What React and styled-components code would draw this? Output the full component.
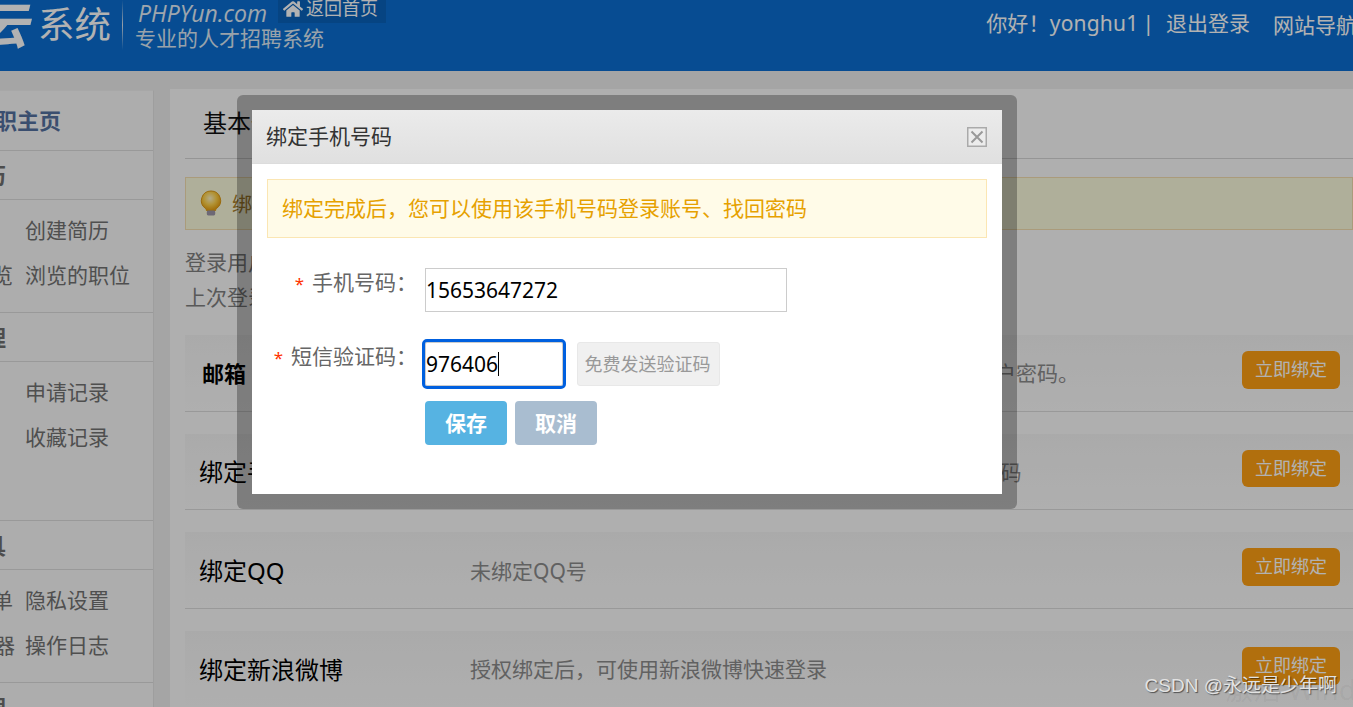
import styled, { createGlobalStyle } from "styled-components";
import { FaHome } from "react-icons/fa";

const cjk = `"Noto Sans", "Noto Sans CJK SC", sans-serif`;

const Global = createGlobalStyle`
  html, body {
    margin: 0;
    height: 100%;
    overflow: hidden;
    background: #ececec;
    font-family: ${cjk};
  }
  * { box-sizing: border-box; }
`;

const Page = styled.div`
  position: relative;
  width: 1353px;
  height: 707px;
  overflow: hidden;
`;

/* header */
const Header = styled.header`
  display: flex;
  align-items: flex-start;
  height: 71px;
  background: #0b6ed1;
  color: #fff;
  overflow: hidden;
`;
const Brand = styled.div`
  display: flex;
  align-items: center;
  height: 50px;
  flex-shrink: 0;
`;
const BrandMark = styled.span`
  font-size: 50px;
  line-height: 50px;
  font-weight: 700;
  font-style: italic;
  width: 38px;
  margin-left: -22px;
  margin-right: 22px;
  color: #fff;
`;
const BrandName = styled.span`
  font-size: 36.5px;
  line-height: 48px;
  height: 50px;
  width: 84px;
  white-space: nowrap;
`;
const BrandRule = styled.span`
  width: 1px;
  height: 50px;
  background: linear-gradient(#0b6ed1, #d8e4f0 50%, #0b6ed1);
  margin-right: 12px;
`;
const Slogan = styled.div`
  display: flex;
  flex-direction: column;
  height: 50px;
`;
const SloganTop = styled.div`
  display: flex;
  height: 26px;
`;
const Domain = styled.span`
  width: 143px;
  font-family: "Open Sans", sans-serif;
  font-style: italic;
  font-size: 23px;
  line-height: 26px;
  padding-left: 3px;
  color: #e4eef8;
  white-space: nowrap;
`;
const HomeLink = styled.a`
  display: flex;
  align-items: center;
  gap: 3px;
  width: 108px;
  height: 23px;
  padding: 0 0 6px 5px;
  background: rgba(0, 0, 0, 0.1);
  font-size: 18px;
  line-height: 17px;
  white-space: nowrap;
`;
const SloganText = styled.span`
  font-size: 21px;
  line-height: 24px;
  white-space: nowrap;
  color: #dbe8f4;
`;
const UserNav = styled.nav`
  display: flex;
  align-items: flex-start;
  margin-left: auto;
  margin-right: -4px;
  padding-top: 7px;
  font-size: 21px;
  line-height: 32px;
  white-space: nowrap;
`;
const Hello = styled.span`
  letter-spacing: 0.2px;
`;
const Pipe = styled.span`
  margin: 0 12px 0 4px;
`;
const NavLink = styled.a`
  margin-left: ${(p) => p.$gap || 0}px;
  margin-top: ${(p) => p.$drop || 0}px;
`;

/* body */
const Body = styled.div`
  display: flex;
  align-items: flex-start;
  gap: 16px;
  padding-top: 18px;
`;
const Sidebar = styled.aside`
  width: 154px;
  height: 620px;
  margin-top: 1px;
  flex-shrink: 0;
  overflow: hidden;
  background: #f8f8f8;
  border-right: 1px solid #e2e2e2;
  border-top: 1px solid #f0f0f0;
`;
const SideInner = styled.div`
  width: 243px;
  margin-left: -90px;
`;
const SideHead = styled.div`
  height: ${(p) => p.$height || 49}px;
  padding: 0 0 3px ${(p) => p.$indent || 8}px;
  display: flex;
  align-items: center;
  font-size: 22px;
  font-weight: 700;
  color: ${(p) => p.$accent ? "#54709f" : "#6f6f6f"};
  border-bottom: 1px solid #dcdcdc;
  white-space: nowrap;
`;
const SideList = styled.div`
  height: ${(p) => p.$height}px;
  padding-top: 6px;
  border-bottom: 1px solid #dcdcdc;
`;
const SideRow = styled.div`
  display: flex;
  gap: 12px;
  height: 45px;
  align-items: center;
`;
const SideCell = styled.a`
  width: ${(p) => p.$wide ? 103 : 120}px;
  text-align: ${(p) => p.$wide ? "right" : "left"};
  font-size: 21px;
  color: #727272;
  white-space: nowrap;
`;

const Main = styled.main`
  flex: 1;
  height: 620px;
  overflow: hidden;
  padding-left: 15px;
  background: #fbfbfb;
`;
const MainTitle = styled.div`
  height: 70px;
  padding: 18px 0 0 18px;
  font-size: 24px;
  line-height: 32px;
  color: #111;
  border-bottom: 1px solid #d6d6d6;
`;
const Notice = styled.div`
  display: flex;
  align-items: center;
  gap: 10px;
  height: 53px;
  margin-top: 18px;
  padding-left: 14px;
  background: #fbfbdd;
  border: 1px solid #f4dfb0;
  font-size: 20px;
  color: #a8802c;
`;
const LoginInfo = styled.div`
  height: 68px;
  margin-top: 15px;
  font-size: 21px;
  line-height: 35px;
  color: #808080;
`;
const BindRow = styled.div`
  display: flex;
  align-items: center;
  height: 76.67px;
  margin-top: 22px;
  padding: 0 13px 0 14px;
  background: linear-gradient(#f4f4f4, #fbfbfb);
  border-bottom: 1px solid #dcdcdc;
`;
const BindTitle = styled.span`
  width: 271px;
  padding-left: ${(p) => p.$strong ? 3 : 0}px;
  margin-bottom: 1px;
  font-size: ${(p) => p.$strong ? 22 : 24}px;
  font-weight: ${(p) => p.$strong ? 700 : 400};
  color: #000;
  white-space: nowrap;
`;
const BindDesc = styled.span`
  flex: 1;
  margin-bottom: 1px;
  font-size: 21px;
  color: #8c8c8c;
  white-space: nowrap;
`;
const BindButton = styled.a`
  width: 98px;
  height: 37.5px;
  margin-bottom: 6px;
  border-radius: 6px;
  background: #fea014;
  color: #fff;
  font-size: 18px;
  line-height: 37px;
  text-align: center;
`;

/* dimmed layer and dialog */
const Overlay = styled.div`
  position: absolute;
  inset: 0;
  background: rgba(0, 0, 0, 0.3);
`;
const DialogFrame = styled.div`
  position: absolute;
  left: 237px;
  top: 95px;
  width: 780px;
  height: 414px;
  padding: 15px;
  border-radius: 6px;
  background: rgba(0, 0, 0, 0.28);
`;
const Dialog = styled.div`
  height: 100%;
  background: #fff;
`;
const DialogBar = styled.div`
  display: flex;
  align-items: center;
  justify-content: space-between;
  height: 54px;
  padding: 0 15px;
  background: linear-gradient(#ebebeb, #e0e0e0);
  border-bottom: 1px solid #dcdcdc;
`;
const DialogTitle = styled.span`
  margin: -3px 0 0 -1px;
  font-size: 21px;
  color: #333;
`;
const CloseIcon = styled.svg`
  width: 20px;
  height: 20px;
`;
const DialogBody = styled.div`
  padding: 15px;
`;
const Tip = styled.div`
  height: 59px;
  padding-left: 14px;
  background: #fffbe8;
  border: 1px solid #fbe6b3;
  font-size: 21px;
  line-height: 56px;
  color: #e6a100;
`;
const FormRow = styled.div`
  display: flex;
  align-items: flex-start;
  margin-top: ${(p) => p.$top}px;
  padding-left: 158px;
`;
const Label = styled.label`
  position: absolute;
  transform: translateX(calc(-100% - 8px));
  font-size: 21px;
  line-height: 28px;
  color: #666;
  white-space: nowrap;
`;
const Star = styled.i`
  font-style: normal;
  font-size: 17px;
  color: #f30;
  margin-right: 8px;
`;
const Field = styled.div`
  display: flex;
  align-items: center;
  width: ${(p) => p.$width}px;
  height: 44px;
  border: 1px solid #ccc;
  font-size: 21px;
  color: #000;
  ${(p) => p.$focused && `
    outline: 3px solid #0060df;
    border-radius: 2px;
    &::after {
      content: "";
      width: 1px;
      height: 24px;
      background: #000;
    }
  `}
`;
const SendCode = styled.span`
  width: 143px;
  height: 44px;
  margin-left: 14px;
  padding-right: 2px;
  border: 1px solid #e8e8e8;
  border-radius: 3px;
  background: #f0f0f0;
  color: #999;
  font-size: 18px;
  line-height: 43px;
  text-align: center;
  white-space: nowrap;
`;
const Action = styled.a`
  width: 82px;
  height: 44px;
  margin-right: 8px;
  border-radius: 4px;
  background: ${(p) => p.$muted ? "#a9bdd0" : "#56b3e2"};
  color: #fff;
  font-size: 21px;
  font-weight: 700;
  line-height: 45px;
  text-align: center;
`;
const ActivationHint = styled.div`
  position: absolute;
  left: 1225px;
  top: 670px;
  font-size: 28px;
  line-height: 38px;
  color: rgba(0, 0, 0, 0.05);
  white-space: nowrap;
`;
const Watermark = styled.div`
  position: absolute;
  right: 16px;
  top: 673px;
  font-family: "Liberation Sans", "Noto Sans CJK SC", sans-serif;
  font-size: 19px;
  line-height: 26px;
  color: #e2e2e2;
  text-shadow: 1px 1px 1px rgba(0, 0, 0, 0.55);
  white-space: nowrap;
`;

const Bulb = () => (
  <svg width="22" height="27" viewBox="0 0 22 27">
    <defs>
      <radialGradient id="bulbGlow" cx="0.45" cy="0.38" r="0.6">
        <stop offset="0" stopColor="#fff6c8" />
        <stop offset="0.55" stopColor="#ffd24a" />
        <stop offset="1" stopColor="#e8a010" />
      </radialGradient>
    </defs>
    <path d="M11 1a9.6 9.6 0 0 0-5.6 17.4c.7.6 1 1.3 1 2.1h9.2c0-.8.3-1.5 1-2.1A9.6 9.6 0 0 0 11 1z" fill="url(#bulbGlow)" stroke="#dd9a14" />
    <rect x="6.8" y="20.5" width="8.4" height="5" rx="1.4" fill="#9c96a8" />
  </svg>
);

const rows = [
  { title: "邮箱", strong: true, desc: "绑定邮箱后，您可以使用该邮箱登录网站，可用它找回账户密码。" },
  { title: "绑定手机", desc: "绑定手机号后， 您可以使用该手机号码登录账号、找回密码" },
  { title: "绑定QQ", desc: "未绑定QQ号" },
  { title: "绑定新浪微博", desc: "授权绑定后，可使用新浪微博快速登录" },
];

const App = () => {
  return (
    <Page>
      <Global />
      <Header>
        <Brand>
          <BrandMark>云</BrandMark>
          <BrandName>系统</BrandName>
          <BrandRule />
          <Slogan>
            <SloganTop>
              <Domain>PHPYun.com</Domain>
              <HomeLink>
                <FaHome size={20} />
                返回首页
              </HomeLink>
            </SloganTop>
            <SloganText>专业的人才招聘系统</SloganText>
          </Slogan>
        </Brand>
        <UserNav>
          <Hello>你好！yonghu1</Hello>
          <Pipe>|</Pipe>
          <NavLink>退出登录</NavLink>
          <NavLink $gap={23} $drop={2}>网站导航</NavLink>
        </UserNav>
      </Header>

      <Body>
        <Sidebar>
          <SideInner>
            <SideHead $height={60} $indent={63} $accent>求职主页</SideHead>
            <SideHead>我的简历</SideHead>
            <SideList $height={113}>
              <SideRow>
                <SideCell $wide />
                <SideCell>创建简历</SideCell>
              </SideRow>
              <SideRow>
                <SideCell $wide>简历预览</SideCell>
                <SideCell>浏览的职位</SideCell>
              </SideRow>
            </SideList>
            <SideHead>求职管理</SideHead>
            <SideList $height={159}>
              <SideRow>
                <SideCell $wide />
                <SideCell>申请记录</SideCell>
              </SideRow>
              <SideRow>
                <SideCell $wide />
                <SideCell>收藏记录</SideCell>
              </SideRow>
            </SideList>
            <SideHead>实用工具</SideHead>
            <SideList $height={113}>
              <SideRow>
                <SideCell $wide>黑名单</SideCell>
                <SideCell>隐私设置</SideCell>
              </SideRow>
              <SideRow>
                <SideCell $wide>简历生成器</SideCell>
                <SideCell>操作日志</SideCell>
              </SideRow>
            </SideList>
            <SideHead>账号管理</SideHead>
          </SideInner>
        </Sidebar>

        <Main>
          <MainTitle>基本信息</MainTitle>
          <Notice>
            <Bulb />
            绑定完成后，您可以使用该手机号码登录账号
          </Notice>
          <LoginInfo>
            登录用户：yonghu1
            <br />
            上次登录时间：2021-10-12
          </LoginInfo>
          {rows.map((row) => (
            <BindRow key={row.title}>
              <BindTitle $strong={row.strong}>{row.title}</BindTitle>
              <BindDesc>{row.desc}</BindDesc>
              <BindButton>立即绑定</BindButton>
            </BindRow>
          ))}
        </Main>
      </Body>

      <Overlay />

      <DialogFrame>
        <Dialog>
          <DialogBar>
            <DialogTitle>绑定手机号码</DialogTitle>
            <CloseIcon viewBox="0 0 20 20">
              <rect x="0.75" y="0.75" width="18.5" height="18.5" fill="#ececec" stroke="#aaa" strokeWidth="1.5" />
              <path d="M4.5 4.5l11 11M15.5 4.5l-11 11" stroke="#999" strokeWidth="2" />
            </CloseIcon>
          </DialogBar>
          <DialogBody>
            <Tip>绑定完成后，您可以使用该手机号码登录账号、找回密码</Tip>
            <FormRow $top={30}>
              <Label>
                <Star>*</Star>手机号码：
              </Label>
              <Field $width={362}>15653647272</Field>
            </FormRow>
            <FormRow $top={30}>
              <Label>
                <Star>*</Star>短信验证码：
              </Label>
              <Field $width={138} $focused>976406</Field>
              <SendCode>免费发送验证码</SendCode>
            </FormRow>
            <FormRow $top={15}>
              <Action>保存</Action>
              <Action $muted>取消</Action>
            </FormRow>
          </DialogBody>
        </Dialog>
      </DialogFrame>

      <ActivationHint>激活 Windows</ActivationHint>
      <Watermark>CSDN @永远是少年啊</Watermark>
    </Page>
  );
};

export default App;
